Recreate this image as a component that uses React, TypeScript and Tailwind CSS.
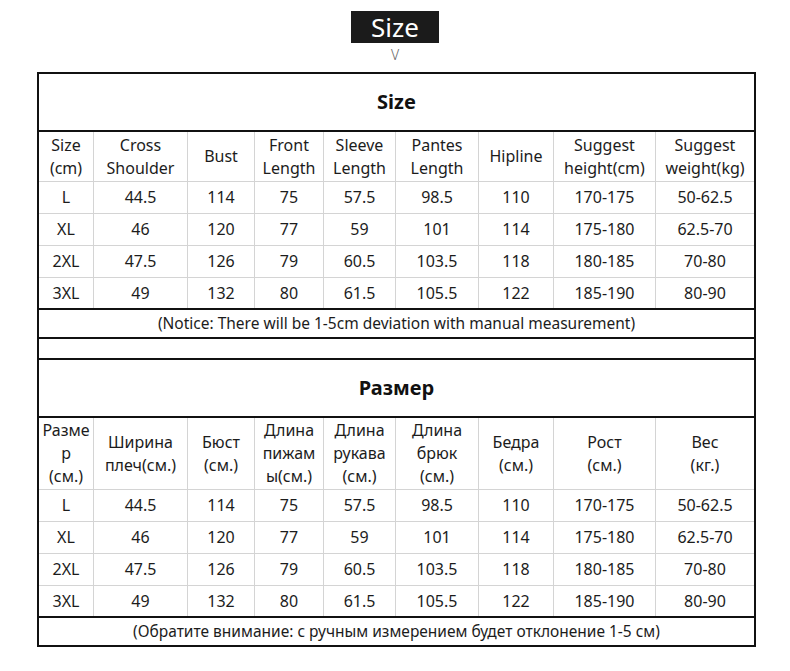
import React from "react";

const cols = "grid-cols-[54px_93px_66px_68px_71px_82px_74px_101px_98px]";

const enHeader: React.ReactNode[] = [
  <>Size<br />(cm)</>,
  <>Cross<br />Shoulder</>,
  <>Bust</>,
  <>Front<br />Length</>,
  <>Sleeve<br />Length</>,
  <>Pantes<br />Length</>,
  <>Hipline</>,
  <>Suggest<br />height(cm)</>,
  <>Suggest<br />weight(kg)</>,
];

const ruHeader: React.ReactNode[] = [
  <>Разме<br />р<br />(см.)</>,
  <>Ширина<br />плеч(см.)</>,
  <>Бюст<br />(см.)</>,
  <>Длина<br />пижам<br />ы(см.)</>,
  <>Длина<br />рукава<br />(см.)</>,
  <>Длина<br />брюк<br />(см.)</>,
  <>Бедра<br />(см.)</>,
  <>Рост<br />(см.)</>,
  <>Вес<br />(кг.)</>,
];

const data: string[][] = [
  ["L", "44.5", "114", "75", "57.5", "98.5", "110", "170-175", "50-62.5"],
  ["XL", "46", "120", "77", "59", "101", "114", "175-180", "62.5-70"],
  ["2XL", "47.5", "126", "79", "60.5", "103.5", "118", "180-185", "70-80"],
  ["3XL", "49", "132", "80", "61.5", "105.5", "122", "185-190", "80-90"],
];

function Row({
  cells,
  h,
  line,
}: {
  cells: React.ReactNode[];
  h: string;
  line: "gray" | "black";
}) {
  return (
    <div
      className={`grid ${cols} gap-x-px bg-[#d4d4d4] ${h} ${
        line === "gray" ? "border-b border-[#d4d4d4]" : "border-b-2 border-[#111]"
      }`}
    >
      {cells.map((c, i) => (
        <div
          key={i}
          className="bg-white flex items-center justify-center text-center text-[16px] leading-[23px] text-[#1c1c1c]"
        >
          <div>{c}</div>
        </div>
      ))}
    </div>
  );
}

function Section({
  title,
  header,
  headerH,
  notice,
}: {
  title: string;
  header: React.ReactNode[];
  headerH: string;
  notice: string;
}) {
  return (
    <>
      <div className="h-[58px] border-b-2 border-[#111] flex items-center justify-center text-[20px] font-bold text-[#111]">
        {title}
      </div>
      <Row cells={header} h={headerH} line="gray" />
      {data.map((r, i) => (
        <Row key={i} cells={r} h="h-[32px]" line={i === 3 ? "black" : "gray"} />
      ))}
      <div className="h-[27px] flex items-center justify-center text-[15.5px] text-[#1c1c1c]">
        {notice}
      </div>
    </>
  );
}

export default function App() {
  return (
    <div
      className="w-[790px] h-[671px] bg-white"
      style={{ fontFamily: '"Noto Sans", "Open Sans", sans-serif' }}
    >
      <div className="pt-[11px] flex flex-col items-center">
        <div className="w-[88px] h-[32px] bg-[#1b1b1b] text-white text-[26px] leading-[32px] flex items-center justify-center">
          Size
        </div>
        <div className="h-[29px] text-[14px] leading-[24px] font-light text-[#666]">V</div>
      </div>
      <div className="ml-[37px] w-[719px] border-2 border-[#111]">
        <Section
          title="Size"
          header={enHeader}
          headerH="h-[50px]"
          notice="(Notice: There will be 1-5cm deviation with manual measurement)"
        />
        <div className="h-[19px] border-t-2 border-b-2 border-[#111] box-content" />
        <Section
          title="Размер"
          header={ruHeader}
          headerH="h-[72px]"
          notice="(Обратите внимание: с ручным измерением будет отклонение 1-5 см)"
        />
      </div>
    </div>
  );
}
